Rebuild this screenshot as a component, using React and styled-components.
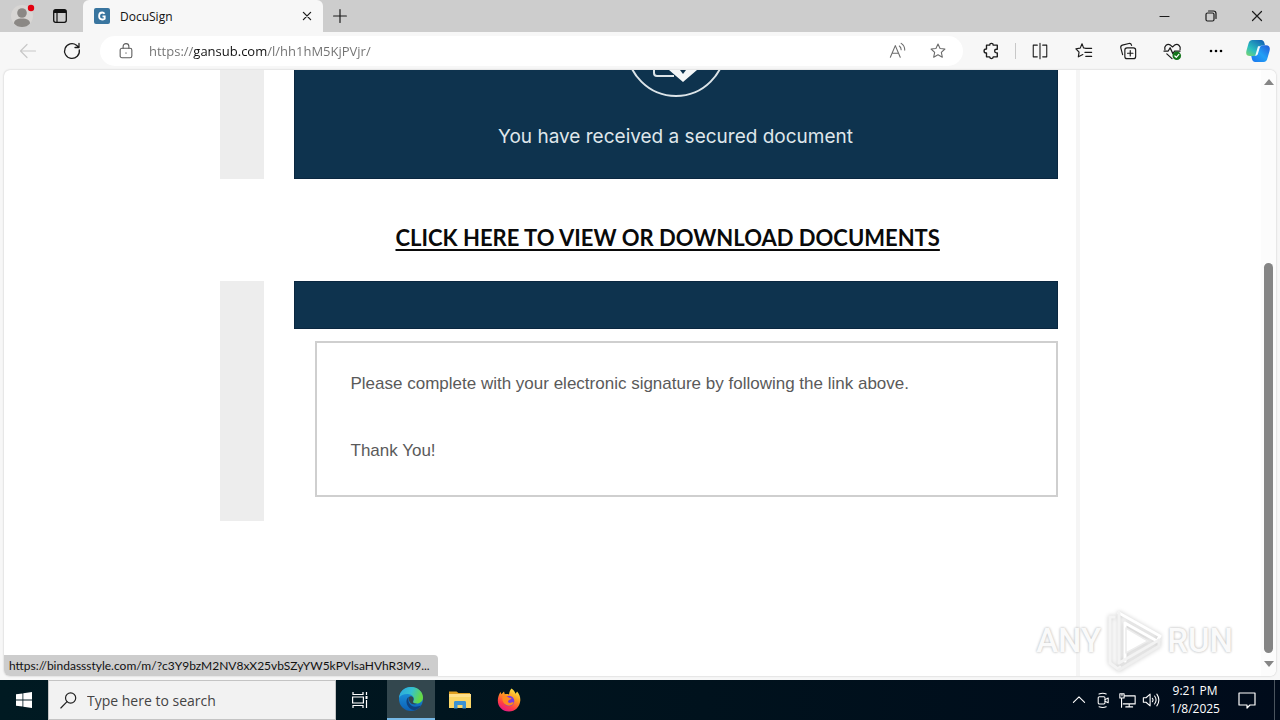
import React from "react";
import styled, { createGlobalStyle } from "styled-components";

const UI_FONT = '"Open Sans", "Noto Sans", sans-serif';

const GlobalStyle = createGlobalStyle`
  *, *::before, *::after { box-sizing: border-box; }
  html, body, #root { height: 100%; margin: 0; }
  body { font-family: ${UI_FONT}; background: #fff; overflow: hidden; }
  button { font: inherit; color: inherit; border: 0; background: none; padding: 0; }
  p { margin: 0; }
  svg { display: block; flex: none; }
`;

const Desktop = styled.div`
  display: flex;
  flex-direction: column;
  height: 100vh;
`;

const Browser = styled.div`
  flex: 1;
  min-height: 0;
  display: flex;
  flex-direction: column;
  background: #f7f7f7;
`;

const TabStrip = styled.header`
  display: flex;
  align-items: stretch;
  height: 32px;
  flex: none;
  background: #cdcdcd;
  padding-left: 4px;
`;

const StripButton = styled.button`
  display: flex;
  align-items: center;
  justify-content: center;
  width: ${(p) => p.$width}px;
`;

const Tab = styled.div`
  display: flex;
  align-items: center;
  gap: 10px;
  width: 240px;
  margin-left: 3px;
  padding: 0 8px 0 11px;
  background: #f7f7f7;
  border-radius: 6px 6px 0 0;
  font-size: 12px;
  color: #111;
`;

const TabTitle = styled.span`
  flex: 1;
`;

const WindowControls = styled.div`
  display: flex;
  margin-left: auto;
`;

const Toolbar = styled.nav`
  display: flex;
  align-items: center;
  height: 38px;
  flex: none;
  padding: 0 2px 0 6px;
`;

const ToolButton = styled.button`
  display: flex;
  align-items: center;
  justify-content: center;
  height: 32px;
  width: ${(p) => p.$width || 44}px;
  flex: none;
`;

const AddressBar = styled.div`
  flex: 1;
  display: flex;
  align-items: center;
  height: 30px;
  margin: 0 6px;
  padding: 0 5px 0 17px;
  border-radius: 15px;
  background: #fff;
`;

const AddressInput = styled.input`
  flex: 1;
  min-width: 0;
  height: 24px;
  margin-left: 14px;
  padding: 0;
  border: 0;
  outline: 0;
  font: 13px ${UI_FONT};
  color: transparent;
  background: linear-gradient(90deg, #707070 44px, #111 44px, #111 118px, #707070 118px);
  background-clip: text;
  -webkit-background-clip: text;
`;

const Divider = styled.span`
  width: 1px;
  height: 16px;
  margin: 0 2px;
  background: #c8c8c8;
`;

const Viewport = styled.div`
  position: relative;
  flex: 1;
  min-height: 0;
  display: flex;
  margin: 0 4px 4px;
  background: #fff;
  border-radius: 6px;
  box-shadow: 0 0 2px #bbb;
  overflow: hidden;
`;

const Page = styled.main`
  flex: 1;
  min-width: 0;
  overflow: hidden;
  display: flex;
  justify-content: center;
`;

const Mail = styled.article`
  width: 100%;
  max-width: 894px;
  padding: 0 18px 0 34px;
  border-right: 4px solid #f5f5f5;
`;

const MailRow = styled.section`
  display: flex;
  gap: 30px;
`;

const SideStripe = styled.div`
  width: 44px;
  flex: none;
  background: #ededed;
`;

const MailBody = styled.div`
  flex: 1;
  min-width: 0;
`;

const Banner = styled.div`
  flex: 1;
  display: flex;
  flex-direction: column;
  align-items: center;
  height: 109px;
  background: #0e334e;
  border: 1px solid #0a2740;
  border-top: 0;
`;

const BannerText = styled.p`
  margin-top: 26px;
  font: 19px/28px Inter, "Liberation Sans", sans-serif;
  color: #dfe6ea;
`;

const LinkRow = styled.div`
  display: flex;
  align-items: center;
  height: 102px;
  padding: 16px 0 0 176px;
`;

const DocumentLink = styled.a`
  font: bold 22px/28px Lato, sans-serif;
  color: #0a0a0a;
  text-decoration: underline;
  text-decoration-thickness: 2px;
  text-underline-offset: 3px;
  text-decoration-skip-ink: none;
  white-space: nowrap;
`;

const Band = styled.div`
  height: 48px;
  background: #0e334e;
  border: 1px solid #0a2740;
`;

const Message = styled.div`
  display: flex;
  flex-direction: column;
  gap: 43px;
  margin: 12px 0 24px 21px;
  padding: 29px 34px 32px;
  border: 2px solid #cfcfcf;
  font: 17px/24px "Liberation Sans", Arial, sans-serif;
  color: #5a5a5a;
`;

const Scrollbar = styled.div`
  display: flex;
  flex-direction: column;
  align-items: center;
  width: 15px;
  padding: 9px 0;
  background: #fcfcfc;
`;

const ScrollThumb = styled.div`
  width: 9px;
  height: 390px;
  margin: auto 0 8px;
  border-radius: 5px;
  background: #858585;
`;

const StatusBubble = styled.div`
  position: absolute;
  left: 0;
  bottom: 0;
  padding: 0 8px 0 5px;
  height: 21px;
  line-height: 22px;
  border-radius: 0 4px 0 0;
  background: #cdcdcd;
  color: #111;
  font-family: Lato, sans-serif;
  font-size: 12px;
  white-space: nowrap;
`;

const Watermark = styled.div`
  position: absolute;
  right: 43px;
  bottom: 3px;
  display: flex;
  align-items: center;
  gap: 4px;
  font: 500 33px/64px Roboto, sans-serif;
  color: #fafafa;
  text-shadow: 0 0 3px #c4c4c4, 0 0 2px #d0d0d0;
`;

const Taskbar = styled.footer`
  display: flex;
  height: 40px;
  flex: none;
  background: linear-gradient(90deg, #001a22, #00121d 55%, #000b1b);
  color: #fff;
`;

const TaskButton = styled.button`
  display: flex;
  align-items: center;
  justify-content: center;
  width: ${(p) => p.$width || 48}px;
  background: ${(p) => (p.$active ? "#33474e" : "transparent")};
  border-bottom: ${(p) => (p.$active ? "2px solid #76b9e6" : "0")};
`;

const SearchBox = styled.label`
  display: flex;
  align-items: center;
  gap: 10px;
  width: 288px;
  padding-left: 11px;
  background: #f2f2f2;
  border: 1px solid #c4c4c4;
`;

const SearchInput = styled.input`
  flex: 1;
  min-width: 0;
  padding: 0;
  border: 0;
  outline: 0;
  background: transparent;
  font: 14px ${UI_FONT};
  &::placeholder { color: #444; opacity: 1; }
`;

const PinnedApps = styled.div`
  display: flex;
  margin-left: 3px;
`;

const Tray = styled.div`
  display: flex;
  margin-left: auto;
  padding-right: 5px;
`;

const Clock = styled.time`
  display: flex;
  flex-direction: column;
  align-items: center;
  justify-content: center;
  width: 64px;
  font-size: 12px;
  line-height: 18px;
  white-space: nowrap;
`;

const PeekLine = styled.span`
  width: 1px;
  margin-left: 7px;
  background: #4a545e;
`;

const Line = ({ size = 20, color = "#1b1b1b", w = 1.2, children }) => (
  <svg width={size} height={size} viewBox="0 0 20 20" fill="none" stroke={color} strokeWidth={w} strokeLinecap="round" strokeLinejoin="round" aria-hidden="true">
    {children}
  </svg>
);

const STAR = "M10 2.2l2.3 5 5.4.6-4 3.7 1.1 5.4-4.8-2.7-4.8 2.7 1.1-5.4-4-3.7 5.4-.6z";

const ProfileIcon = () => (
  <svg width="28" height="28" viewBox="0 0 28 28" aria-hidden="true">
    <circle cx="14" cy="14" r="11" fill="#d8d6d4" />
    <circle cx="14" cy="11" r="4.8" fill="#8b8885" />
    <path d="M6 21.500c0-3.300 3-5 8-5s8 1.700 8 5c-2 2.500-4.700 3.500-8 3.500s-6-1-8-3.500z" fill="#8b8885" />
    <circle cx="23" cy="6" r="3.200" fill="#e3000f" />
  </svg>
);

const WorkspaceIcon = () => (
  <svg width="16" height="16" viewBox="0 0 16 16" aria-hidden="true">
    <rect x="1.700" y="1.700" width="12.600" height="12.600" rx="2" fill="none" stroke="#111" strokeWidth="1.300" />
    <path d="M2 2h12v3H2z" fill="#111" />
    <path d="M5 4v10" stroke="#111" strokeWidth="1.200" />
  </svg>
);

const Favicon = () => (
  <svg width="16" height="16" viewBox="0 0 16 16" aria-hidden="true">
    <rect width="16" height="16" rx="2" fill="#39759f" />
    <path d="M10.600 5.800C10 5 9.200 4.500 8.200 4.500c-2 0-3.100 1.500-3.100 3.500s1.200 3.500 3.100 3.500c1 0 1.800-.3 2.500-.8V8.300H8.500" fill="none" stroke="#fff" strokeWidth="1.800" />
  </svg>
);

const CopilotIcon = () => (
  <svg width="24" height="24" viewBox="0 0 24 24" aria-hidden="true">
    <defs>
      <linearGradient id="cpA" x1="0" y1="1" x2=".8" y2="0">
        <stop offset="0" stopColor="#7fd66a" />
        <stop offset=".4" stopColor="#2bbfc0" />
        <stop offset="1" stopColor="#1465b5" />
      </linearGradient>
      <linearGradient id="cpB" x1="0" y1="1" x2="1" y2="0">
        <stop offset="0" stopColor="#1a74ee" />
        <stop offset=".5" stopColor="#22a0f5" />
        <stop offset="1" stopColor="#2458d8" />
      </linearGradient>
    </defs>
    <path d="M6.500 1h8.700c1.800 0 2.700 1.400 3.200 3l.6 2.200h-2.600c-2 0-2.900 1.300-3.500 3.200l-1.300 4.300c-.6 1.900-1.500 3.300-3.600 3.300H4C.5 17-.4 14.800.5 11.500l2-7C3.100 2.300 4.300 1 6.500 1z" fill="url(#cpA)" />
    <path d="M17.500 23H9.300c-2 0-3-1.500-3.400-3.200L5.300 17H8c2.100 0 3-1.400 3.600-3.300l1.300-4.300c.6-1.900 1.500-3.200 3.500-3.200H20c3.500 0 4.400 2.500 3.500 5.800l-2 7c-.6 2.500-1.700 4-4 4z" fill="url(#cpB)" />
    <path d="M12 7.200h2.800c-.7.7-1 1.500-1.300 2.400l-1.500 4.800c-.4 1.300-1 2.100-2.200 2.100h-.9c.6-.5.8-1.100 1-2z" fill="#f4fbff" />
  </svg>
);

const EdgeIcon = () => (
  <svg width="26" height="26" viewBox="0 0 26 26" aria-hidden="true">
    <defs>
      <linearGradient id="edA" x1="0" y1="0" x2="1" y2=".3">
        <stop offset="0" stopColor="#2aa5e0" />
        <stop offset=".55" stopColor="#35c1d0" />
        <stop offset="1" stopColor="#66d944" />
      </linearGradient>
      <linearGradient id="edB" x1="0" y1="0" x2="0" y2="1">
        <stop offset="0" stopColor="#1f9de3" />
        <stop offset="1" stopColor="#0c60b5" />
      </linearGradient>
    </defs>
    <circle cx="13" cy="13" r="12" fill="url(#edB)" />
    <path d="M1 12C1.500 5.500 6.500 1 13 1c7 0 12 5 12 10.500 0 3.500-2.700 6-6.200 6-2.500 0-4.200-1-3.500-2.300 1.600-2.700 0-6.500-4.300-7C6.500 7.700 2.500 9 1 12z" fill="url(#edA)" />
    <path d="M10.800 10.800C6.500 13.500 8 23 16.500 24.300c3-.8 5.300-2.600 6.500-4.700-3 1.500-7.500 1.600-10-.4-2.800-2.300-3-5.500-2.200-8.400z" fill="#10427f" />
    <path d="M11 11c1.300-1.200 3.500-.7 4.300.8.600 1.200.2 2.400-.3 3.500-.7 1.500 1.200 2.600 4 2.400-2 1.300-5 .8-6.700-1C10.800 15 10.300 12.500 11 11z" fill="#33474e" />
  </svg>
);

const FolderIcon = () => (
  <svg width="24" height="24" viewBox="0 0 24 24" aria-hidden="true">
    <path d="M1 3.500h7.500L10.500 5H22v4H1z" fill="#e0a021" />
    <path d="M1 6h22v14H1z" fill="#fbd666" />
    <path d="M1 6h22v3H1z" fill="#ffe08a" />
    <path d="M6 20.500v-6c0-1 .5-1.500 1.500-1.500h9c1 0 1.500.5 1.500 1.500v6h-3.500V17h-5v3.500z" fill="#3b92d3" />
  </svg>
);

const FirefoxIcon = () => (
  <svg width="24" height="24" viewBox="0 0 24 24" aria-hidden="true">
    <defs>
      <linearGradient id="ffA" x1=".8" y1="0" x2=".3" y2="1">
        <stop offset="0" stopColor="#fff04a" />
        <stop offset=".4" stopColor="#ff9a1f" />
        <stop offset=".75" stopColor="#ff3b47" />
        <stop offset="1" stopColor="#e3178a" />
      </linearGradient>
    </defs>
    <path d="M14.500.5c2.300 1.500 3.600 3.500 4 5.300l1.600-2.300c2.500 2.700 3.400 5.800 3.200 9C22.800 19 18 23.500 12 23.500 5.500 23.500.8 18.800.8 12.500c0-3.200 1.100-6.200 2.800-8.500l.8 2.300L7 3.500l.8 2.700c1.400-.4 3-.3 4.200.2.300-2.400 1-4.300 2.500-5.900z" fill="url(#ffA)" />
    <circle cx="12" cy="13" r="5.300" fill="#7a3be0" />
    <path d="M5.500 8.500c2.500-1 5-.3 6.300 1.200l2.700.3c0 1.700-2.500 1.700-3.300 2.700-.5 1.200.2 2.200 1.500 2.200 1.800 0 2.500-.8 4-.5-1 2.800-4.300 4-7 2.800-3.500-1.500-4.800-5-4.200-8.700z" fill="#ff8a1f" />
  </svg>
);

const PlayDrawing = styled.svg`
  filter: drop-shadow(0 0 2px #c8c8c8);
`;

const PlayMark = () => (
  <PlayDrawing width="58" height="64" viewBox="0 0 58 64" fill="none" strokeLinecap="round" strokeLinejoin="round" aria-hidden="true">
    <path d="M9 8H5v46l8 6 2-2" stroke="#f4f4f4" strokeWidth="3" />
    <path d="M14 4l41 23-3 5-32-18v38" stroke="#fff" strokeWidth="3" />
    <path d="M14 4v50l40-23" stroke="#f3f3f3" strokeWidth="3" />
    <path d="M14 61l40-24v-6" stroke="#efefef" strokeWidth="3" />
    <path d="M21 19v25l22-12z" fill="#fff" stroke="#ececec" strokeWidth="1.500" />
  </PlayDrawing>
);

const Seal = () => (
  <svg width="94" height="27" viewBox="0 0 94 27" fill="none" aria-hidden="true">
    <circle cx="47" cy="-23" r="49" stroke="#dce4e8" strokeWidth="2" />
    <path d="M25 0v3q0 3 3 3h17" stroke="#dce4e8" strokeWidth="2" />
    <path d="M40 0l14 12L68 0H57l-3 4-3-4z" fill="#f4f7f8" />
  </svg>
);

export default function App() {
  return (
    <Desktop>
      <GlobalStyle />
      <Browser>
        <TabStrip>
          <StripButton $width={36} aria-label="Profile"><ProfileIcon /></StripButton>
          <StripButton $width={40} aria-label="Tab actions"><WorkspaceIcon /></StripButton>
          <Tab>
            <Favicon />
            <TabTitle>DocuSign</TabTitle>
            <StripButton $width={16} aria-label="Close tab">
              <Line size={16} w={1.6}><path d="M5.500 5.500l9 9M14.500 5.500l-9 9" /></Line>
            </StripButton>
          </Tab>
          <StripButton $width={34} aria-label="New tab">
            <Line size={16} w={1.5}><path d="M10 2v16M2 10h16" /></Line>
          </StripButton>
          <WindowControls>
            <StripButton $width={46} aria-label="Minimize"><Line><path d="M5 10.500h9" /></Line></StripButton>
            <StripButton $width={46} aria-label="Restore">
              <Line><rect x="5" y="7" width="8" height="8" rx="1.500" /><path d="M7.500 5h5c1.500 0 2.500 1 2.500 2.500v5" /></Line>
            </StripButton>
            <StripButton $width={46} aria-label="Close"><Line><path d="M5.500 5.500l9 9M14.500 5.500l-9 9" /></Line></StripButton>
          </WindowControls>
        </TabStrip>

        <Toolbar>
          <ToolButton aria-label="Back"><Line color="#c8c8c8"><path d="M17.500 10h-15M9 3.500L2.500 10 9 16.500" /></Line></ToolButton>
          <ToolButton aria-label="Refresh"><Line w={1.3}><path d="M17.300 9A7.400 7.400 0 1 1 14.500 4.200l2.300 2M17 2.500v4h-4" /></Line></ToolButton>
          <AddressBar>
            <Line size={18} color="#5c5c5c"><rect x="3.500" y="7" width="13" height="10.500" rx="2" /><path d="M6.800 7V5a3.200 3.200 0 0 1 6.400 0v2M10 12v.5" /></Line>
            <AddressInput aria-label="Address" defaultValue="https://gansub.com/l/hh1hM5KjPVjr/" />
            <ToolButton $width={40} aria-label="Read aloud">
              <Line size={18} color="#6b6b6b"><path d="M1.500 17L7 4l5.500 13M3.500 12.500h7M11.500 4.500q2 1.500 2 4M13.500 1.500q4 2.500 4 7.500" /></Line>
            </ToolButton>
            <ToolButton $width={40} aria-label="Add to favorites"><Line size={18} color="#6b6b6b"><path d={STAR} /></Line></ToolButton>
          </AddressBar>
          <ToolButton aria-label="Extensions">
            <Line size={18} w={1.5}><path d="M5 3.500h3.500a2 2 0 0 1 4 0H17V8h-1a2 2 0 0 0 0 4h1v4.500h-4.500a2 2 0 0 1-4 0H5v-4.300H4.500a2.200 2.200 0 0 1 0-4.400H5z" /></Line>
          </ToolButton>
          <Divider />
          <ToolButton aria-label="Split screen">
            <Line size={18}><path d="M7 3.500H2.500v13H7M13 3.500h4.500v13H13M10 1.500v17" /></Line>
          </ToolButton>
          <ToolButton aria-label="Favorites">
            <Line size={18} w={1.3}><path d="M11.500 7L9.500 6.500 7.800 2 5.800 6.800l-4.800.7 3.500 3.700-.8 5.300 5-2.500M12 7h6.500M11 11.500h7.500M12 16h6.500" /></Line>
          </ToolButton>
          <ToolButton aria-label="Collections">
            <Line size={18} w={1.3}><rect x="6.500" y="6.500" width="12" height="12" rx="2.500" /><path d="M12.500 9.500v6M9.500 12.500h6M4 14L2 6.500C1.700 5 2.300 4 3.700 3.500L11 1.700c1.500-.3 2.500.3 3 2" /></Line>
          </ToolButton>
          <ToolButton aria-label="Browser essentials">
            <Line size={19} w={1.3}>
              <path d="M2 8C1 4 4.500 1.500 7.500 3L10 5.200 12.500 3C16 1.500 19 4.500 18 8M1 9.500h4.500L7.500 6l3 6.500 1.700-3H18M4 12.500l5.500 5" />
              <circle cx="14.500" cy="14.500" r="4.500" fill="#14751b" stroke="none" />
              <path d="M12.500 14.700l1.500 1.400 2.700-3" stroke="#fff" />
            </Line>
          </ToolButton>
          <ToolButton aria-label="Settings and more">
            <svg width="16" height="4" viewBox="0 0 16 4" aria-hidden="true"><circle cx="3" cy="2" r="1.300" /><circle cx="8" cy="2" r="1.300" /><circle cx="13" cy="2" r="1.300" /></svg>
          </ToolButton>
          <ToolButton $width={40} aria-label="Copilot"><CopilotIcon /></ToolButton>
        </Toolbar>

        <Viewport>
          <Page>
            <Mail>
              <MailRow>
                <SideStripe />
                <Banner>
                  <Seal />
                  <BannerText>You have received a secured document</BannerText>
                </Banner>
              </MailRow>
              <LinkRow>
                <DocumentLink href="#">CLICK HERE TO VIEW OR DOWNLOAD DOCUMENTS</DocumentLink>
              </LinkRow>
              <MailRow>
                <SideStripe />
                <MailBody>
                  <Band />
                  <Message>
                    <p>Please complete with your electronic signature by following the link above.</p>
                    <p>Thank You!</p>
                  </Message>
                </MailBody>
              </MailRow>
            </Mail>
          </Page>
          <Scrollbar>
            <svg width="10" height="6" viewBox="0 0 10 6" aria-hidden="true"><path d="M5 0l5 6H0z" fill="#858585" /></svg>
            <ScrollThumb />
            <svg width="10" height="6" viewBox="0 0 10 6" aria-hidden="true"><path d="M5 6L0 0h10z" fill="#858585" /></svg>
          </Scrollbar>
          <Watermark><span>ANY</span><PlayMark /><span>RUN</span></Watermark>
          <StatusBubble>https://bindassstyle.com/m/?c3Y9bzM2NV8xX25vbSZyYW5kPVlsaHVhR3M9...</StatusBubble>
        </Viewport>
      </Browser>

      <Taskbar>
        <TaskButton aria-label="Start">
          <svg width="16" height="16" viewBox="0 0 16 16" fill="#fff" aria-hidden="true"><path d="M0 2.300L6.500 1.400v6.200H0zM7.300 1.300L16 0v7.600H7.300zM0 8.400h6.500v6.200L0 13.700zM7.300 8.400H16V16l-8.700-1.300z" /></svg>
        </TaskButton>
        <SearchBox>
          <Line size={17} color="#222" w={1.4}><circle cx="12.500" cy="7" r="6" /><path d="M8.300 11.300L1 18.800" /></Line>
          <SearchInput type="search" aria-label="Search" placeholder="Type here to search" />
        </SearchBox>
        <TaskButton aria-label="Task view">
          <svg width="18" height="18" viewBox="0 0 18 18" fill="none" stroke="#fff" strokeWidth="1.200" aria-hidden="true"><path d="M2 1v2.500h10V1M2 17v-2.500h10V17M1.600 6h10.800v6H1.600zM15.500 1v3M15.500 9v8" /><path d="M14.500 5h2v3h-2z" fill="#fff" stroke="none" /></svg>
        </TaskButton>
        <PinnedApps>
          <TaskButton $active aria-label="Microsoft Edge"><EdgeIcon /></TaskButton>
          <TaskButton $width={49} aria-label="File Explorer"><FolderIcon /></TaskButton>
          <TaskButton $width={49} aria-label="Firefox"><FirefoxIcon /></TaskButton>
        </PinnedApps>
        <Tray>
          <TaskButton $width={24} aria-label="Show hidden icons"><Line size={14} color="#fff" w={1.6}><path d="M2 13.500l8-8 8 8" /></Line></TaskButton>
          <TaskButton $width={24} aria-label="Meet now"><Line size={16} color="#fff" w={1.3}><rect x="4" y="6" width="8.500" height="9" rx="1.500" /><path d="M12.500 9.500l4-2v6l-4-2M5 2.500q5-2 9 0M5 18.500q5 1.500 9 0" /></Line></TaskButton>
          <TaskButton $width={24} aria-label="Network"><Line size={17} color="#fff" w={1.3}><path d="M7 4.500h12v9.500H5M12 14v3.500M8 17.500h8M3 8v10M1 2h5v5H1zM3.500 2v2.500" /></Line></TaskButton>
          <TaskButton $width={24} aria-label="Volume"><Line size={18} color="#fff"><path d="M1.500 7.500h3L9 3.500v13l-4.500-4h-3zM11.500 8q1.500 2 0 4M14 5.500q3.300 4.500 0 9M16.500 3.500q4.500 6.500 0 13" /></Line></TaskButton>
          <Clock><span>9:21 PM</span><span>1/8/2025</span></Clock>
          <TaskButton $width={40} aria-label="Notifications"><Line size={20} color="#fff"><path d="M2 3h16v12h-5l-3 3v-3H2z" /></Line></TaskButton>
          <PeekLine />
        </Tray>
      </Taskbar>
    </Desktop>
  );
}
